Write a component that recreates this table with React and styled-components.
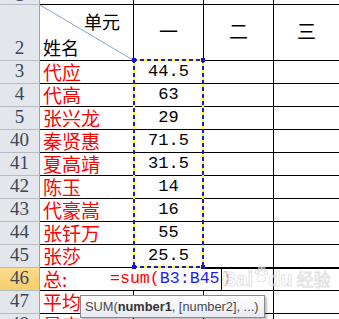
import React from 'react';
import styled, { createGlobalStyle } from 'styled-components';

const Global = createGlobalStyle`
  html, body { margin: 0; padding: 0; background: #fff; overflow: hidden; }
  body { width: 339px; height: 319px; }
`;

const Sheet = styled.div`
  position: relative;
  display: grid;
  grid-template-columns: 40px 94px 70px 70px 1fr;
  grid-template-rows: 5px 56px repeat(12, 23px);
  width: 339px;
  height: 319px;
  overflow: hidden;
  font-family: "Noto Sans CJK SC", sans-serif;
`;

const RowHead = styled.div`
  box-sizing: border-box;
  border-right: 1px solid #9ea4ab;
  border-bottom: 1px solid #b5bbc2;
  background: ${p => (p.$active ? 'linear-gradient(#fcdc8e, #f7cd6c)' : '#e3e6ea')};
  display: flex;
  align-items: flex-end;
  justify-content: center;
  padding-bottom: ${p => (p.$short ? '0' : '3px')};
  font-family: "Liberation Serif", serif;
  font-size: 19px;
  line-height: 1;
  color: #3a4758;
  overflow: hidden;
`;

const Cell = styled.div`
  box-sizing: border-box;
  position: relative;
  border-right: ${p => (p.$last ? 'none' : '1px solid #000')};
  border-bottom: 1px solid #000;
  display: flex;
  align-items: ${p => (p.$middle ? 'center' : 'flex-end')};
  justify-content: ${p => (p.$center ? 'center' : 'flex-start')};
  padding: 0 3px 1px;
  white-space: nowrap;
  overflow: visible;
`;

const Name = styled.span`
  color: #ff0000;
  font-size: 19px;
  line-height: 21px;
`;

const Num = styled.span`
  font-family: "Liberation Mono", monospace;
  font-size: 17px;
  line-height: 20px;
  color: #000;
`;

const Ordinal = styled.span`
  font-size: 19px;
  line-height: 1;
  color: #000;
  margin-bottom: 4px;
`;

const HeadA = styled(Cell)`
  flex-direction: column;
  align-items: stretch;
  justify-content: space-between;
  padding: 6px 13px 3px 3px;
`;

const HeadLabel = styled.span`
  position: relative;
  font-size: 18px;
  line-height: 20px;
  color: #000;
  align-self: ${p => (p.$right ? 'flex-end' : 'flex-start')};
`;

const Diagonal = styled.svg`
  position: absolute;
  left: 0;
  top: 0;
  width: 100%;
  height: 100%;
`;

const EditRow = styled.div`
  grid-column: 2 / -1;
  display: grid;
  grid-template-columns: 234px 1fr;
  box-sizing: border-box;
  border-bottom: 1px solid #000;
  background: linear-gradient(#000, #000) no-repeat 163px 0 / 100% 1px, #fff;
`;

const EditCell = styled.div`
  box-sizing: border-box;
  border-right: 1px solid #000;
  display: flex;
  align-items: stretch;
  padding-left: 3px;
  white-space: nowrap;
`;

const Label = styled.span`
  display: inline-flex;
  align-items: flex-end;
  width: 67px;
  padding-bottom: 1px;
  color: #ff0000;
  font-size: 19px;
  line-height: 21px;
`;

const Formula = styled.span`
  display: inline-flex;
  align-items: flex-end;
  padding-bottom: 1px;
  font-family: "Liberation Mono", monospace;
  font-size: 16.6px;
  line-height: 20px;
  color: ${p => p.$color || '#ff0000'};
`;

const Caret = styled.span`
  width: 1px;
  background: #000;
  margin-left: 1px;
`;

const Ants = styled.div`
  position: absolute;
  left: 133px;
  top: 59px;
  width: 71px;
  height: 209px;
  box-sizing: border-box;
  pointer-events: none;
  background:
    repeating-linear-gradient(90deg, #1b1bd6 0 4px, #ffff00 4px 7px) left top / 100% 2px no-repeat,
    repeating-linear-gradient(90deg, #1b1bd6 0 4px, #ffff00 4px 7px) left bottom / 100% 2px no-repeat,
    repeating-linear-gradient(180deg, #1b1bd6 0 4px, #ffff00 4px 7px) left top / 2px 100% no-repeat,
    repeating-linear-gradient(180deg, #1b1bd6 0 4px, #ffff00 4px 7px) right top / 2px 100% no-repeat;
`;

const Corner = styled.span`
  position: absolute;
  width: 4px;
  height: 4px;
  background: #1010e0;
  ${p => (p.$v === 'top' ? 'top: -1px;' : 'bottom: -1px;')}
  ${p => (p.$h === 'left' ? 'left: -1px;' : 'right: -1px;')}
`;

const Tooltip = styled.div`
  position: absolute;
  left: 80px;
  top: 295px;
  box-sizing: border-box;
  height: 23px;
  padding: 0 5px 0 4px;
  display: flex;
  align-items: center;
  border: 1px solid #8a8a8a;
  background: linear-gradient(#ffffff, #e9eaf2);
  box-shadow: 2px 2px 2px rgba(0, 0, 0, 0.25);
  font-family: "Liberation Sans", Arial, sans-serif;
  font-size: 12.8px;
  color: #4a4a4a;
  white-space: nowrap;
`;

const Bold = styled.b`
  font-weight: 700;
  color: #333;
`;

const Watermark = styled.div`
  position: absolute;
  left: 222px;
  top: 266px;
  display: flex;
  align-items: flex-end;
  pointer-events: none;
  color: rgba(255, 255, 255, 0.5);
  -webkit-text-stroke: 1px rgba(200, 200, 200, 0.5);
  font-family: "Liberation Sans", sans-serif;
  font-weight: 700;
  font-size: 20px;
  line-height: 24px;
`;

const Paw = styled.svg`
  width: 14px;
  height: 22px;
  margin: 0 0 3px 1px;
`;

const WaterCJK = styled.span`
  font-family: "Noto Sans CJK SC", sans-serif;
  font-size: 17px;
  font-weight: 400;
  margin-left: 4px;
`;

const rows = [
  { n: 3, name: '代应', v: '44.5' },
  { n: 4, name: '代高', v: '63' },
  { n: 5, name: '张兴龙', v: '29' },
  { n: 40, name: '秦贤惠', v: '71.5' },
  { n: 41, name: '夏高靖', v: '31.5' },
  { n: 42, name: '陈玉', v: '14' },
  { n: 43, name: '代豪嵩', v: '16' },
  { n: 44, name: '张钎万', v: '55' },
  { n: 45, name: '张莎', v: '25.5' },
];

export default function App() {
  return (
    <>
      <Global />
      <Sheet>
        <RowHead $short>1</RowHead>
        <Cell />
        <Cell />
        <Cell />
        <Cell $last />

        <RowHead>2</RowHead>
        <HeadA>
          <Diagonal viewBox="0 0 93 55" preserveAspectRatio="none">
            <line x1="0" y1="0" x2="93" y2="55" stroke="#8aa3cc" strokeWidth="1" vectorEffect="non-scaling-stroke" />
          </Diagonal>
          <HeadLabel $right>单元</HeadLabel>
          <HeadLabel>姓名</HeadLabel>
        </HeadA>
        <Cell $center $middle><Ordinal>一</Ordinal></Cell>
        <Cell $center $middle><Ordinal>二</Ordinal></Cell>
        <Cell $center $middle $last><Ordinal>三</Ordinal></Cell>

        {rows.map(r => (
          <React.Fragment key={r.n}>
            <RowHead>{r.n}</RowHead>
            <Cell><Name>{r.name}</Name></Cell>
            <Cell $center><Num>{r.v}</Num></Cell>
            <Cell />
            <Cell $last />
          </React.Fragment>
        ))}

        <RowHead $active>46</RowHead>
        <EditRow>
          <EditCell>
            <Label>总:</Label>
            <Formula>=sum(</Formula>
            <Formula $color="#1d1df0">B3:B45</Formula>
            <Caret />
            <Formula $color="#f08a8a">)</Formula>
          </EditCell>
          <div />
        </EditRow>

        <RowHead>47</RowHead>
        <Cell><Name>平均</Name></Cell>
        <Cell />
        <Cell />
        <Cell $last />

        <RowHead>48</RowHead>
        <Cell><Name>最高</Name></Cell>
        <Cell />
        <Cell />
        <Cell $last />

        <Ants>
          <Corner $v="top" $h="left" />
          <Corner $v="top" $h="right" />
          <Corner $v="bottom" $h="left" />
          <Corner $v="bottom" $h="right" />
        </Ants>

        <Watermark>
          <span>Bai</span>
          <Paw viewBox="0 0 14 22">
            <g fill="rgba(255,255,255,0.5)" stroke="rgba(200,200,200,0.6)" strokeWidth="1">
              <ellipse cx="3" cy="6" rx="1.8" ry="2.3" />
              <ellipse cx="6" cy="2.8" rx="1.8" ry="2.2" />
              <ellipse cx="9.5" cy="3" rx="1.8" ry="2.2" />
              <ellipse cx="12" cy="6.5" rx="1.6" ry="2.2" />
              <path d="M7.5 8.5 C4 9 2.5 13 3.5 14.5 C5 16 10 16 11.5 14.5 C12.5 13 11 9 7.5 8.5 Z" />
            </g>
          </Paw>
          <span>du</span>
          <WaterCJK>经验</WaterCJK>
        </Watermark>

        <Tooltip>
          SUM(<Bold>number1</Bold>, [number2], ...)
        </Tooltip>
      </Sheet>
    </>
  );
}
